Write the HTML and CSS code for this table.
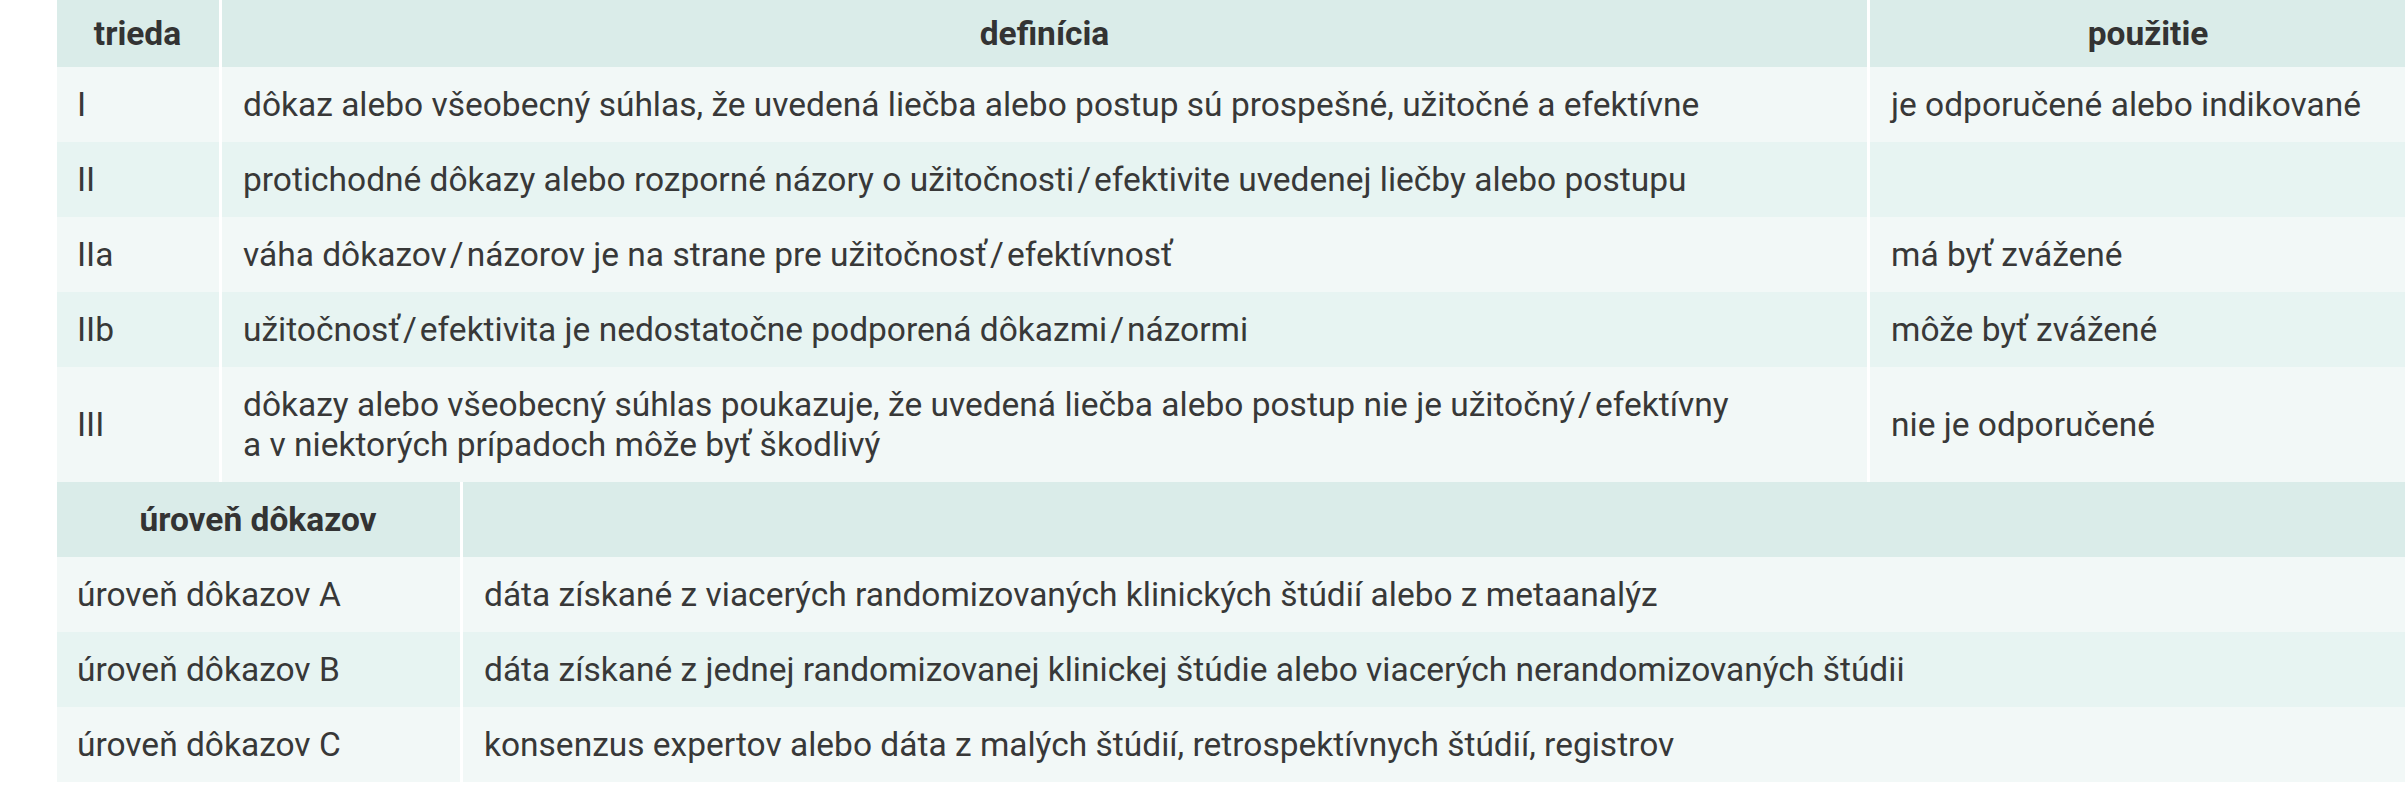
FILE: index.html
```html
<!DOCTYPE html>
<html lang="sk">
<head>
<meta charset="utf-8">
<title>Triedy odporúčaní a úrovne dôkazov</title>
<link rel="stylesheet" href="styles.css">
</head>
<body>
<div class="page">
  <table class="grid classes">
    <colgroup>
      <col class="c-class">
      <col class="c-def">
      <col class="c-use">
    </colgroup>
    <thead>
      <tr class="head">
        <th>trieda</th>
        <th>definícia</th>
        <th class="use-head">použitie</th>
      </tr>
    </thead>
    <tbody>
      <tr class="odd">
        <td>I</td>
        <td>dôkaz alebo všeobecný súhlas, že uvedená liečba alebo postup sú prospešné, užitočné a efektívne</td>
        <td>je odporučené alebo indikované</td>
      </tr>
      <tr class="even">
        <td>II</td>
        <td>protichodné dôkazy alebo rozporné názory o užitočnosti<span class="sl">/</span>efektivite uvedenej liečby alebo postupu</td>
        <td></td>
      </tr>
      <tr class="odd">
        <td>IIa</td>
        <td>váha dôkazov<span class="sl">/</span>názorov je na strane pre užitočnosť<span class="sl">/</span>efektívnosť</td>
        <td>má byť zvážené</td>
      </tr>
      <tr class="even">
        <td>IIb</td>
        <td>užitočnosť<span class="sl">/</span>efektivita je nedostatočne podporená dôkazmi<span class="sl">/</span>názormi</td>
        <td>môže byť zvážené</td>
      </tr>
      <tr class="odd">
        <td>III</td>
        <td>dôkazy alebo všeobecný súhlas poukazuje, že uvedená liečba alebo postup nie je užitočný<span class="sl">/</span>efektívny<br>a v niektorých prípadoch môže byť škodlivý</td>
        <td>nie je odporučené</td>
      </tr>
    </tbody>
  </table>
  <table class="grid levels">
    <colgroup>
      <col class="c-level">
      <col class="c-text">
    </colgroup>
    <thead>
      <tr class="head">
        <th>úroveň dôkazov</th>
        <th></th>
      </tr>
    </thead>
    <tbody>
      <tr class="odd">
        <td>úroveň dôkazov A</td>
        <td>dáta získané z viacerých randomizovaných klinických štúdií alebo z metaanalýz</td>
      </tr>
      <tr class="even">
        <td>úroveň dôkazov B</td>
        <td>dáta získané z jednej randomizovanej klinickej štúdie alebo viacerých nerandomizovaných štúdii</td>
      </tr>
      <tr class="odd">
        <td>úroveň dôkazov C</td>
        <td>konsenzus expertov alebo dáta z malých štúdií, retrospektívnych štúdií, registrov</td>
      </tr>
    </tbody>
  </table>
</div>
</body>
</html>
```

FILE: styles.css
```css
html, body {
  margin: 0;
  padding: 0;
  background: #ffffff;
}

body {
  font-family: Roboto, "Liberation Sans", Arial, sans-serif;
  font-size: 33.5px;
  line-height: 40px;
  color: #383838;
}

.page {
  padding-left: 57px;
}

.grid {
  width: 100%;
  table-layout: fixed;
  border-collapse: separate;
  border-spacing: 0;
}

.grid th,
.grid td {
  padding: 17.5px 21px;
  text-align: left;
  vertical-align: middle;
  border-left: 3px solid #ffffff;
  box-sizing: border-box;
}

.grid th:first-child,
.grid td:first-child {
  border-left: 0;
  padding-left: 20px;
}

.grid th {
  font-weight: bold;
  color: #333333;
  text-align: center;
}

.head th {
  background: #daece9;
}

.classes .head th {
  padding-top: 13.5px;
  padding-bottom: 13.5px;
}

.classes .head th.use-head {
  padding-right: 0;
}

.sl {
  margin: 0 3px;
}

.odd td {
  background: #f2f8f7;
}

.even td {
  background: #e7f4f2;
}

.c-class { width: 162px; }
.c-def { width: 1648px; }
.c-use { width: auto; }

.c-level { width: 403px; }
.c-text { width: auto; }
```
